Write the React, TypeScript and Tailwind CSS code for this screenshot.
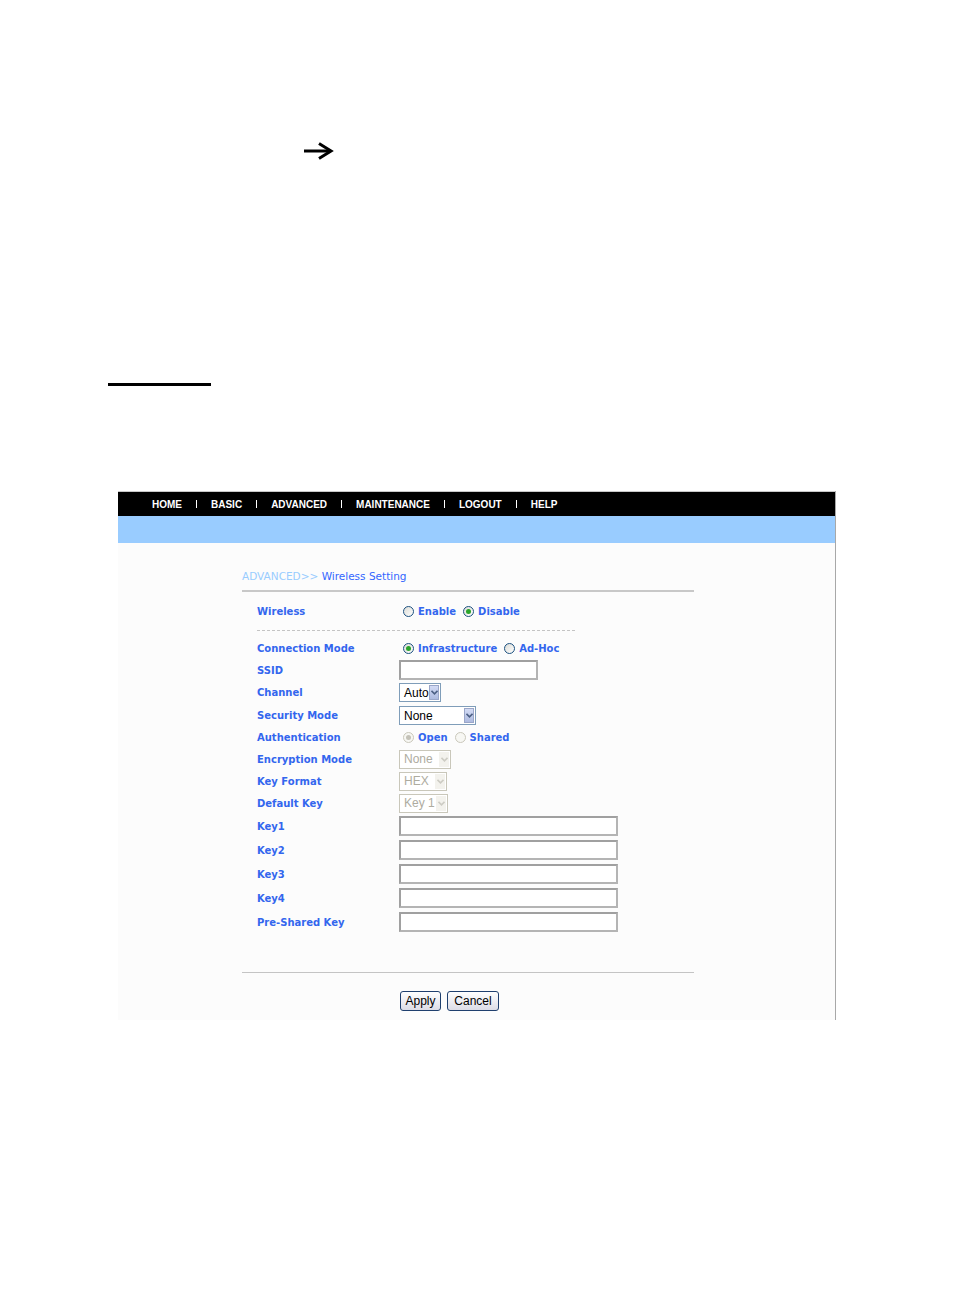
import React from 'react';

const navItems = ['HOME', 'BASIC', 'ADVANCED', 'MAINTENANCE', 'LOGOUT', 'HELP'];

const Chevron: React.FC<{ disabled?: boolean }> = ({ disabled }) => (
  <svg width="7" height="5" viewBox="0 0 7 5">
    <polyline
      points="0.5,0.8 3.5,3.8 6.5,0.8"
      fill="none"
      stroke={disabled ? '#cdccc4' : '#4d6185'}
      strokeWidth="1.6"
    />
  </svg>
);

const Radio: React.FC<{ checked?: boolean; disabled?: boolean }> = ({ checked, disabled }) => (
  <span
    className={
      disabled
        ? 'flex h-[11px] w-[11px] items-center justify-center rounded-full border border-[#cac8bb] bg-[#f7f7f3]'
        : 'flex h-[11px] w-[11px] items-center justify-center rounded-full border border-[#1c5180] bg-gradient-to-br from-[#dcdcd6] to-white'
    }
  >
    {checked && (
      <span className={disabled ? 'h-[5px] w-[5px] rounded-full bg-[#c4c2b8]' : 'h-[5px] w-[5px] rounded-full bg-[#2aa52a]'} />
    )}
  </span>
);

const RadioGroup: React.FC<{ options: { label: string; checked?: boolean }[]; disabled?: boolean }> = ({
  options,
  disabled,
}) => (
  <div className="ml-[4px] flex items-center gap-[7px]">
    {options.map((o) => (
      <div key={o.label} className="flex items-center gap-[4px]">
        <Radio checked={o.checked} disabled={disabled} />
        <span className="text-[10px] font-bold text-[#3366ee]">{o.label}</span>
      </div>
    ))}
  </div>
);

const Select: React.FC<{ value: string; width: string; disabled?: boolean }> = ({ value, width, disabled }) => (
  <div
    className={`flex h-[19px] items-center justify-between bg-white ${width} ${
      disabled ? 'border border-[#c9c7ba]' : 'border border-[#7f9db9]'
    }`}
  >
    <span
      className={`pl-[4px] font-['Liberation_Sans',Arial,sans-serif] text-[12px] leading-none ${
        disabled ? 'text-[#aeac9f]' : 'text-black'
      }`}
    >
      {value}
    </span>
    <span
      className={`mr-px flex h-[15px] w-[10px] items-center justify-center ${
        disabled ? 'bg-[#f3f2ed]' : 'border border-[#9aa6c8] bg-gradient-to-b from-[#d3dbf5] to-[#aebbe0]'
      }`}
    >
      <Chevron disabled={disabled} />
    </span>
  </div>
);

const TextBox: React.FC<{ width: string }> = ({ width }) => (
  <div className={`h-[20px] ${width} border-2 border-t-[#a0a0a0] border-l-[#a0a0a0] border-r-[#b4b4b4] border-b-[#b4b4b4] bg-white`} />
);

const Row: React.FC<{ label: string; h: string; children?: React.ReactNode }> = ({ label, h, children }) => (
  <div className={`flex items-center ${h}`}>
    <div className="w-[157px] shrink-0 pl-[15px] text-[10px] font-bold text-[#3366ee]">{label}</div>
    {children}
  </div>
);

export default function App() {
  return (
    <div className="h-[1311px] w-[954px] bg-white font-['DejaVu_Sans',sans-serif]">
      <div className="h-[142px]" />
      <div className="ml-[302px] h-[18px]">
        <svg width="32" height="18" viewBox="0 0 32 18">
          <line x1="2" y1="9" x2="29" y2="9" stroke="black" strokeWidth="3" />
          <polyline points="17,1.5 29,9 17,16.5" fill="none" stroke="black" strokeWidth="3" strokeLinejoin="miter" />
        </svg>
      </div>
      <div className="h-[223px]" />
      <div className="ml-[108px] h-[3px] w-[103px] bg-black" />
      <div className="h-[105px]" />

      <div className="ml-[118px] w-[718px] border-r border-[#a8a8a8]">
        <div className="h-px bg-[#c8c8c8]" />
        <nav className="flex h-[24px] items-center bg-black pl-[34px] font-['Liberation_Sans',Arial,sans-serif] text-[10px] font-bold text-white">
          {navItems.map((item, i) => (
            <React.Fragment key={item}>
              {i > 0 && <span className="mx-[14px] h-[8px] w-px bg-white" />}
              <span>{item}</span>
            </React.Fragment>
          ))}
        </nav>
        <div className="h-[27px] bg-[#99ccff]" />

        <div className="h-[477px] bg-[#fcfcfc] pl-[124px]">
          <div className="w-[452px]">
            <div className="pt-[26px] text-[10.5px] leading-[14px]">
              <span className="text-[#99ccff]">ADVANCED&gt;&gt; </span>
              <span className="text-[#3366ff]">Wireless Setting</span>
            </div>
            <div className="mt-[7px] h-[2px] bg-[#c8c8c8]" />

            <div className="mt-[8px]">
              <Row label="Wireless" h="h-[22px]">
                <RadioGroup options={[{ label: 'Enable' }, { label: 'Disable', checked: true }]} />
              </Row>
            </div>
            <div className="ml-[15px] mt-[8px] w-[318px] border-t border-dashed border-[#c4c4c4]" />

            <div className="mt-[6px]">
              <Row label="Connection Mode" h="h-[22px]">
                <RadioGroup options={[{ label: 'Infrastructure', checked: true }, { label: 'Ad-Hoc' }]} />
              </Row>
              <Row label="SSID" h="h-[22px]">
                <TextBox width="w-[139px]" />
              </Row>
              <Row label="Channel" h="h-[23px]">
                <Select value="Auto" width="w-[42px]" />
              </Row>
              <Row label="Security Mode" h="h-[23px]">
                <Select value="None" width="w-[77px]" />
              </Row>
              <Row label="Authentication" h="h-[21px]">
                <RadioGroup disabled options={[{ label: 'Open', checked: true }, { label: 'Shared' }]} />
              </Row>
              <Row label="Encryption Mode" h="h-[22px]">
                <Select value="None" width="w-[52px]" disabled />
              </Row>
              <Row label="Key Format" h="h-[22px]">
                <Select value="HEX" width="w-[48px]" disabled />
              </Row>
              <Row label="Default Key" h="h-[22px]">
                <Select value="Key 1" width="w-[49px]" disabled />
              </Row>
              {['Key1', 'Key2', 'Key3', 'Key4', 'Pre-Shared Key'].map((k) => (
                <Row key={k} label={k} h="h-[24px]">
                  <TextBox width="w-[219px]" />
                </Row>
              ))}
            </div>

            <div className="mt-[38px] h-px bg-[#c4c4c4]" />

            <div className="ml-[158px] mt-[18px] flex gap-[6px] font-['Liberation_Sans',Arial,sans-serif] text-[12px] text-black">
              <button className="flex h-[20px] w-[41px] items-center justify-center rounded-[3px] border border-[#1f3f6e] bg-gradient-to-b from-white to-[#dcdce6]">
                Apply
              </button>
              <button className="flex h-[20px] w-[52px] items-center justify-center rounded-[3px] border border-[#1f3f6e] bg-gradient-to-b from-white to-[#dcdce6]">
                Cancel
              </button>
            </div>
          </div>
        </div>
      </div>
    </div>
  );
}
